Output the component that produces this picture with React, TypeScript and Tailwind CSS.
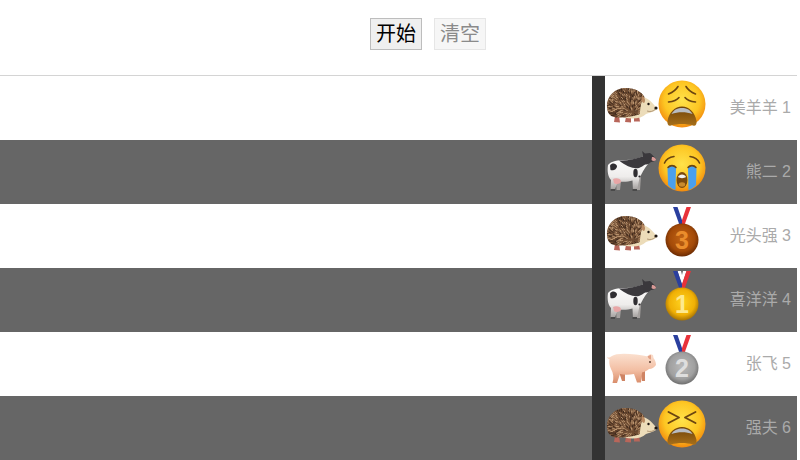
const Spines = () => {
  // quills on the hedgehog's back, scattered with a small hash so they don't line up
  const lines: React.ReactElement[] = [];
  for (let x = 0; x < 40; x += 2.1) {
    for (let y = 11; y < 42; y += 2.1) {
      const h = Math.abs(Math.sin(x * 12.9898 + y * 78.233) * 43758.5453) % 1;
      const px = x + h * 1.6;
      const py = y + ((h * 7) % 1) * 1.6;
      const a = Math.atan2(py - 36, px - 26) + (h - 0.5) * 0.7;
      lines.push(
        <line
          key={x + "-" + y}
          x1={px}
          y1={py}
          x2={px + Math.cos(a) * 2.6}
          y2={py + Math.sin(a) * 2.6}
          stroke={h > 0.55 ? "#35231a" : "#c9a37c"}
          strokeWidth="0.85"
        />
      );
    }
  }
  return <>{lines}</>;
};

const Hedgehog = () => (
  <svg width="52" height="64" viewBox="0 0 52 64" className="shrink-0">
    <defs>
      <clipPath id="hogBack">
        <path d="M1 31 C0.5 20 9 12 20 12 C29 12 36 16 38.5 21 C35 25 34 32 34 38 C24 42 8 43 4 39 C2 37 1.2 34 1 31 Z" />
      </clipPath>
    </defs>
    <path d="M9 40 L8 46 L14 46.5 L13 40 Z M20 41 L19 46 L25 46.5 L25 41 Z M28 40 L28 45.5 L34 45.5 L33 40 Z" fill="#b8665a" />
    <path d="M10 38 C20 44 34 44 40 38 C46 36 50 35 51 32.5 C47 27 43 23 36 20 L14 30 Z" fill="#ecdcb9" />
    <path d="M1 31 C0.5 20 9 12 20 12 C29 12 36 16 38.5 21 C35 25 34 32 34 38 C24 42 8 43 4 39 C2 37 1.2 34 1 31 Z" fill="#6f4c32" />
    <g clipPath="url(#hogBack)">
      <Spines />
    </g>
    <path d="M36 20 C39 21 40 25 38 27 C36 27 34.5 23 36 20 Z" fill="#b98a62" />
    <path d="M41 35 C44 36 47 35.5 49 33.5" fill="none" stroke="#8a6a4a" strokeWidth="0.6" />
    <circle cx="42.5" cy="28" r="1.2" fill="#1c1410" />
    <circle cx="50" cy="32" r="1.6" fill="#1c1410" />
  </svg>
);

const Cow = () => (
  <svg width="52" height="64" viewBox="0 0 52 64" className="shrink-0">
    <defs>
      <linearGradient id="cowBody" x1="0" y1="0" x2="0" y2="1">
        <stop offset="0" stopColor="#ffffff" />
        <stop offset="0.6" stopColor="#eeeceb" />
        <stop offset="1" stopColor="#9e9a98" />
      </linearGradient>
    </defs>
    <path d="M10 40 L10.5 50 L14 50 L15 41 Z M31 38 L31 50 L34 50 L35 36 Z" fill="#a5a19f" />
    <path d="M2 25 C5 21 12 20 20 20 C27 20 33 18 38 16 L42 24 C38 29 36 33 33.5 38 L31 50.5 L27 50.5 L26.5 40.5 C22 42 17 42 12 41.5 L8.5 50.5 L4.5 50.5 L5 40 C2 37 1 31 2 25 Z" fill="url(#cowBody)" />
    <path d="M13 20.5 C21 21 30 19 38 16 L40 24 C37 26 35 27 33 28 C27 29 20 26 13 20.5 Z" fill="#3b393d" />
    <path d="M4 25.5 C6 22.5 10 23 11 26 C11 29.5 7 31 4.5 30 Z" fill="#2f2d31" />
    <ellipse cx="29.5" cy="33" rx="2.2" ry="4.2" fill="#2f2d31" />
    <circle cx="33.5" cy="36.5" r="1.1" fill="#2f2d31" />
    <path d="M7 39 C10 37.5 15 38.5 15 41.5 C14 44.5 9.5 44.5 8 43 Z" fill="#e8a6a6" />
    <path d="M37 15 L36 11 L39 13.5 L44 13 C47 15 48 17 49.5 18 C50 21 47 22 45 22 C42 25 39 25 37 23 Z" fill="#3a383c" />
    <path d="M46 17 C48 16.5 50 18 50 20 C48.5 21.5 46.5 21 45.5 20 Z" fill="#d99a96" />
    <path d="M4.5 49 h4.5 v2 h-4.5 Z M26.5 49 h4.5 v2 h-4.5 Z" fill="#4a4a4a" />
  </svg>
);

const Pig = () => (
  <svg width="52" height="64" viewBox="0 0 52 64" className="shrink-0">
    <defs>
      <linearGradient id="pigBody" x1="0" y1="0" x2="0" y2="1">
        <stop offset="0" stopColor="#fbe0cf" />
        <stop offset="0.55" stopColor="#f3bfa4" />
        <stop offset="1" stopColor="#d98d6b" />
      </linearGradient>
    </defs>
    <path d="M13 40 L16 49 L19 49 L19 41 Z M34 39 L36 49 L39 49 L39 38 Z" fill="#cf8464" />
    <path d="M1 25 C3 26 4 25.5 5 24.5 C10 21 20 21.5 30 22.5 C35 23 39 24 42 24.5 L44 22 L47 23 L47.5 26 C49 28 50 30 50 33 C48 35.5 46 37 43 37 C41 39 38 40 36 40.5 L35 50.5 L31 50.5 L28 42 C23 43 18 43 14 42 L11 51 L6.5 51 C8 46 7.5 41 5 37 C3 33 3 29 3.5 27 C2.5 27 1.5 26.5 1 25 Z" fill="url(#pigBody)" />
    <circle cx="44" cy="30" r="0.9" fill="#4a2d22" />
    <path d="M41.5 24 L45 23 L45 27.5 C43.5 27.5 42 26 41.5 24 Z" fill="#e2a185" />
  </svg>
);

const Animal = ({ kind }: { kind: string }) => {
  if (kind === "cow") return <Cow />;
  if (kind === "pig") return <Pig />;
  return <Hedgehog />;
};

const FaceBase = ({ id }: { id: string }) => (
  <>
    <defs>
      <radialGradient id={id} cx="50%" cy="42%" r="58%">
        <stop offset="0" stopColor="#ffe24a" />
        <stop offset="0.65" stopColor="#fdc623" />
        <stop offset="1" stopColor="#f28a0e" />
      </radialGradient>
      <linearGradient id={id + "Mouth"} x1="0" y1="0" x2="0" y2="1">
        <stop offset="0" stopColor="#6f4208" />
        <stop offset="1" stopColor="#a8701a" />
      </linearGradient>
    </defs>
    <circle cx="24" cy="28" r="23.5" fill={"url(#" + id + ")"} />
  </>
);

const stroke = "#6b4510";

const Weary = () => (
  <svg width="48" height="64" viewBox="0 0 48 64" className="shrink-0">
    <FaceBase id="faceWeary" />
    <g fill="none" stroke={stroke} strokeWidth="1.6" strokeLinecap="round">
      <path d="M10.5 18 C14 16.5 18 14 20 10.5" />
      <path d="M37.5 18 C34 16.5 30 14 28 10.5" />
      <path d="M10.5 26 C15 25.5 19 24 21 21.5" />
      <path d="M37.5 26 C33 25.5 29 24 27 21.5" />
    </g>
    <path d="M9.5 45 C11 36 17 30.5 24 30.5 C31 30.5 37 36 38.5 45 C39 49 37 50.5 35 49.5 C28 47.5 20 47.5 13 49.5 C11 50.5 9 49 9.5 45 Z" fill="url(#faceWearyMouth)" />
    <path d="M13.5 38 C16 33.5 20 32 24 32 C28 32 32 33.5 34.5 38 C28 35.8 20 35.8 13.5 38 Z" fill="#b8bcc2" />
  </svg>
);

const Crying = () => (
  <svg width="48" height="64" viewBox="0 0 48 64" className="shrink-0">
    <FaceBase id="faceCry" />
    <g fill="none" stroke={stroke} strokeWidth="1.6" strokeLinecap="round">
      <path d="M6.5 23 C8 19.5 12 17 16 16.5" />
      <path d="M41.5 23 C40 19.5 36 17 32 16.5" />
    </g>
    <path d="M9.5 29 C10 25 17 25 18 28 L17.5 50 C15 49.5 12 47.5 10 45 Z" fill="#4aa0ee" />
    <path d="M38.5 29 C38 25 31 25 30 28 L30.5 50 C33 49.5 36 47.5 38 45 Z" fill="#4aa0ee" />
    <g fill="none" stroke={stroke} strokeWidth="1.6" strokeLinecap="round">
      <path d="M10 27.5 C12 25 16 25 18 27.5" />
      <path d="M30 27.5 C32 25 36 25 38 27.5" />
    </g>
    <ellipse cx="24" cy="40" rx="5.5" ry="8" fill="#7b4a0e" />
    <path d="M20 37 C21 33.5 27 33.5 28 37 C26 38.5 22 38.5 20 37 Z" fill="#f4f4f2" />
    <ellipse cx="24" cy="44.5" rx="3.2" ry="2.2" fill="#c98b2d" />
  </svg>
);

const Tired = () => (
  <svg width="48" height="64" viewBox="0 0 48 64" className="shrink-0">
    <FaceBase id="faceTired" />
    <g fill="none" stroke={stroke} strokeWidth="1.9" strokeLinecap="round" strokeLinejoin="round">
      <path d="M10.5 16 L21 21.5 L10.5 27" />
      <path d="M37.5 16 L27 21.5 L37.5 27" />
    </g>
    <path d="M9.5 44 C11 36 17 31 24 31 C31 31 37 36 38.5 44 C39 48 37 49.5 35 48.5 C28 46.5 20 46.5 13 48.5 C11 49.5 9 48 9.5 44 Z" fill="url(#faceTiredMouth)" />
    <path d="M13.5 38 C16 33.8 20 32.5 24 32.5 C28 32.5 32 33.8 34.5 38 C28 35.8 20 35.8 13.5 38 Z" fill="#b8bcc2" />
  </svg>
);

const medalColors: Record<string, { id: string; light: string; mid: string; dark: string; num: string }> = {
  "1": { id: "medalGold", light: "#ffd21f", mid: "#f0b005", dark: "#a87404", num: "#fde98f" },
  "2": { id: "medalSilver", light: "#b9b9b9", mid: "#a0a0a0", dark: "#6f6f6f", num: "#dedede" },
  "3": { id: "medalBronze", light: "#c26414", mid: "#a34a08", dark: "#6b2b03", num: "#ea8d2c" },
};

const Medal = ({ place }: { place: string }) => {
  const c = medalColors[place];
  return (
    <svg width="48" height="64" viewBox="0 0 48 64" className="shrink-0">
      <defs>
        <radialGradient id={c.id} cx="50%" cy="45%" r="55%">
          <stop offset="0" stopColor={c.light} />
          <stop offset="0.7" stopColor={c.mid} />
          <stop offset="1" stopColor={c.dark} />
        </radialGradient>
      </defs>
      <path d="M19.5 3 L23 3 L24 7 L25 3 L28.5 3 L24 17 Z" fill="#fff" />
      <path d="M15 3 L19.5 3 L24 16 L24 22 L21.5 21 Z" fill="#2a3f9e" />
      <path d="M33 3 L28.5 3 L24 16 L24 22 L26.5 21 Z" fill="#e8323a" />
      <circle cx="24" cy="36" r="16.5" fill={"url(#" + c.id + ")"} />
      <text
        x="24"
        y="45"
        textAnchor="middle"
        fontSize="25"
        fontWeight="700"
        fontFamily="'Liberation Sans', sans-serif"
        fill={c.num}
      >
        {place}
      </text>
    </svg>
  );
};

const Status = ({ kind }: { kind: string }) => {
  if (kind === "weary") return <Weary />;
  if (kind === "cry") return <Crying />;
  if (kind === "tired") return <Tired />;
  return <Medal place={kind} />;
};

const rows = [
  { animal: "hedgehog", status: "weary", name: "美羊羊 1" },
  { animal: "cow", status: "cry", name: "熊二 2" },
  { animal: "hedgehog", status: "3", name: "光头强 3" },
  { animal: "cow", status: "1", name: "喜洋洋 4" },
  { animal: "pig", status: "2", name: "张飞 5" },
  { animal: "hedgehog", status: "tired", name: "强夫 6" },
];

export default function App() {
  return (
    <div className="w-[797px] font-['Liberation_Sans','Noto_Sans_CJK_SC',sans-serif]">
      <div className="h-[76px] border-b border-[#d4d4d4] flex justify-center gap-3 pt-[18px] pl-[59px]">
        <button className="h-8 w-[52px] border border-[#bdbdbd] bg-[#efefef] text-[20px] leading-none text-black">
          开始
        </button>
        <button
          disabled
          className="h-8 w-[52px] border border-[#e6e6e6] bg-[#f6f6f6] text-[20px] leading-none text-[#8a8a8a]"
        >
          清空
        </button>
      </div>
      {rows.map((row, i) => (
        <div
          key={row.name}
          className={
            i % 2 === 1
              ? "flex h-16 bg-[#666666] text-[#aaaaaa]"
              : "flex h-16 bg-white text-[#aaaaaa]"
          }
        >
          <div className="w-[592px] shrink-0" />
          <div className="w-[13px] shrink-0 bg-[#333333]" />
          <div className="flex flex-1 items-center pl-px pr-[6px]">
            <Animal kind={row.animal} />
            <Status kind={row.status} />
            <div className="flex-1 text-right text-base">{row.name}</div>
          </div>
        </div>
      ))}
    </div>
  );
}
